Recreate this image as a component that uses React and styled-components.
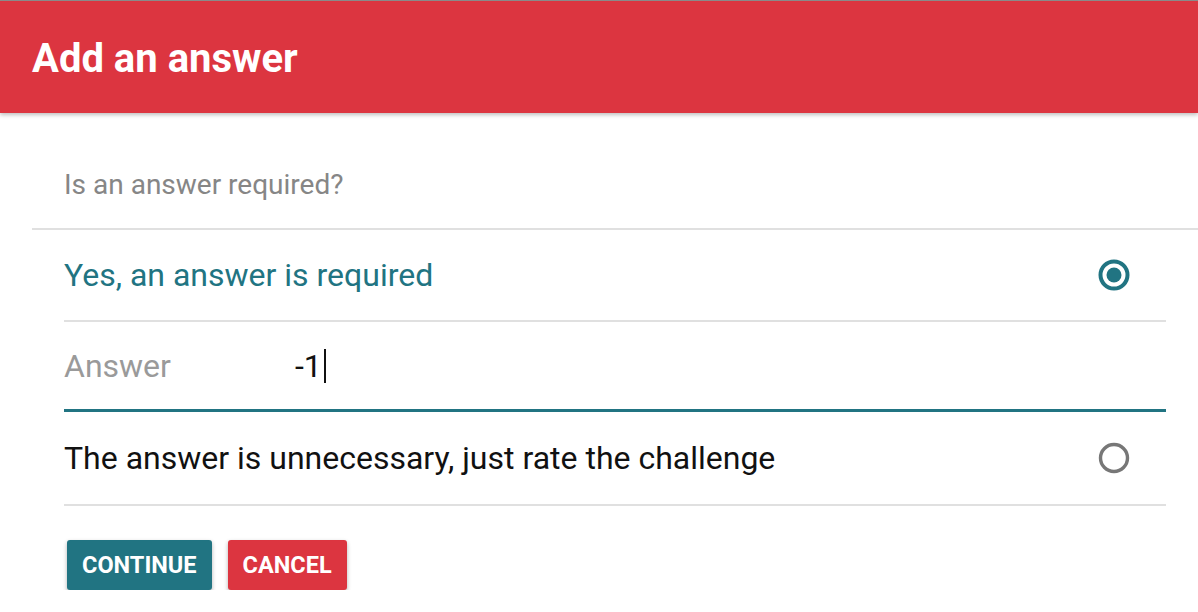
import React from "react";
import styled, { createGlobalStyle } from "styled-components";

const GlobalStyle = createGlobalStyle`
  html, body {
    margin: 0;
    padding: 0;
    background: #fff;
    font-family: Roboto, "Liberation Sans", Arial, sans-serif;
  }
`;

const TEAL = "#217482";
const RED = "#dc3540";

const Header = styled.header`
  height: 112px;
  background-color: ${RED};
  border-top: 1px solid #8a8a8a;
  box-shadow: 0 2px 4px rgba(0, 0, 0, 0.25);
  display: flex;
  align-items: center;
  padding-left: 32px;
  position: relative;
  z-index: 1;
`;

const Title = styled.h1`
  margin: 0;
  color: #fff;
  font-size: 40px;
  font-weight: 700;
  padding-top: 2px;
`;

const Body = styled.main`
  padding-left: 32px;
`;

const Subheader = styled.div`
  height: 117px;
  display: flex;
  align-items: center;
  padding-left: 32px;
  padding-top: 28px;
  box-sizing: border-box;
  color: #868686;
  font-size: 28px;
  border-bottom: 2px solid #e0e0e0;
`;

const List = styled.div`
  margin-left: 32px;
  margin-right: 32px;
`;

const Row = styled.label`
  display: flex;
  align-items: center;
  justify-content: space-between;
  height: ${(p) => p.$height}px;
  box-sizing: border-box;
  border-bottom: ${(p) => p.$border};
  font-size: 32px;
  color: ${(p) => p.$color};
  cursor: pointer;
`;

const RadioWrap = styled.span`
  width: 34px;
  height: 34px;
  margin-right: 35px;
  display: flex;
`;

const AnswerField = styled.span`
  display: flex;
  align-items: center;
`;

const AnswerLabel = styled.span`
  width: 231px;
  color: #9a9a9a;
`;

const AnswerValue = styled.span`
  color: #111;
  display: flex;
  align-items: center;
`;

const Caret = styled.span`
  width: 2px;
  height: 34px;
  background: #111;
  margin-left: 2px;
`;

const Actions = styled.div`
  display: flex;
  gap: 16px;
  padding: 34px 0 0 35px;
`;

const Button = styled.button`
  height: 50px;
  padding: 0 15px;
  border: none;
  border-radius: 3px;
  background-color: ${(p) => p.$bg};
  color: #fff;
  font-family: Roboto, "Liberation Sans", Arial, sans-serif;
  font-size: 23.5px;
  font-weight: 700;
  text-transform: uppercase;
  letter-spacing: 0;
  box-shadow: 0 2px 4px rgba(0, 0, 0, 0.3);
  cursor: pointer;
`;

const Radio = ({ checked }) => (
  <RadioWrap>
    <svg width="34" height="34" viewBox="0 0 34 34">
      <circle
        cx="17"
        cy="17"
        r="13.5"
        fill="none"
        stroke={checked ? TEAL : "#777"}
        strokeWidth={checked ? 4 : 3.4}
      />
      {checked && <circle cx="17" cy="17" r="7.5" fill={TEAL} />}
    </svg>
  </RadioWrap>
);

export default function App() {
  return (
    <>
      <GlobalStyle />
      <Header>
        <Title>Add an answer</Title>
      </Header>
      <Body>
        <Subheader>Is an answer required?</Subheader>
        <List>
          <Row $height={92} $border="2px solid #e0e0e0" $color={TEAL}>
            <span>Yes, an answer is required</span>
            <Radio checked />
          </Row>
          <Row $height={90} $border={`3px solid ${TEAL}`} $color="#111">
            <AnswerField>
              <AnswerLabel>Answer</AnswerLabel>
              <AnswerValue>
                -1
                <Caret />
              </AnswerValue>
            </AnswerField>
          </Row>
          <Row $height={94} $border="2px solid #e0e0e0" $color="#111">
            <span>The answer is unnecessary, just rate the challenge</span>
            <Radio />
          </Row>
        </List>
        <Actions>
          <Button $bg={TEAL}>Continue</Button>
          <Button $bg={RED}>Cancel</Button>
        </Actions>
      </Body>
    </>
  );
}
